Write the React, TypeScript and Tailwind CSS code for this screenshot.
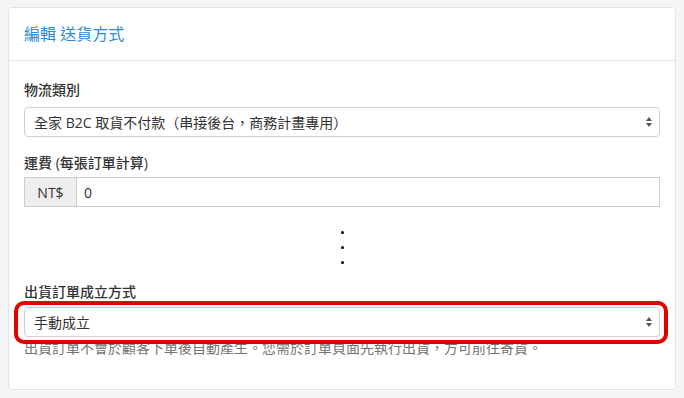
const font = { fontFamily: '"Open Sans", "Noto Sans CJK TC", sans-serif' };

function Arrows() {
  return (
    <svg width="8" height="12" viewBox="0 0 8 12" className="shrink-0">
      <path d="M4 1 L7 5 L1 5 Z" fill="#555" />
      <path d="M4 11 L7 7 L1 7 Z" fill="#555" />
    </svg>
  );
}

function FakeSelect({ value }: { value: string }) {
  return (
    <div className="flex h-[30px] items-center justify-between rounded-[4px] border border-[#cfcfcf] bg-white pl-[9px] pr-[6px] text-[14px] text-[#333]">
      <span>{value}</span>
      <Arrows />
    </div>
  );
}

export default function App() {
  return (
    <div className="h-[398px] w-[684px] bg-[#f5f5f5] px-2 pt-[7px]" style={font}>
      <div className="h-[383px] rounded-[4px] border border-[#e3e3e3] bg-white">
        <div className="flex h-[53px] items-center border-b border-[#e3e3e3] px-[15px]">
          <h3 className="text-[16px] text-[#2a8ad8]">編輯 送貨方式</h3>
        </div>
        <div className="px-[15px] pt-[20px]">
          <label className="block text-[14px] font-medium leading-[18px] text-[#333]">物流類別</label>
          <div className="mt-[8px]">
            <FakeSelect value="全家 B2C 取貨不付款（串接後台，商務計畫專用）" />
          </div>

          <label className="mt-[17px] block text-[14px] font-medium leading-[18px] text-[#333]">運費 (每張訂單計算)</label>
          <div className="mt-[5px] flex h-[30px] border border-[#ccc] text-[14px] text-[#333]">
            <div className="flex w-[52px] items-center justify-center border-r border-[#ccc] bg-[#eee]">NT$</div>
            <div className="flex items-center pl-[7px]">0</div>
          </div>

          <div className="flex flex-col items-center gap-[12px] pt-[24px]">
            <span className="h-[3px] w-[3px] rounded-full bg-black" />
            <span className="h-[3px] w-[3px] rounded-full bg-black" />
            <span className="h-[3px] w-[3px] rounded-full bg-black" />
          </div>

          <label className="mt-[19px] block text-[14px] font-medium leading-[18px] text-[#333]">出貨訂單成立方式</label>
          <div className="relative mt-[6px]">
            <FakeSelect value="手動成立" />
            <div className="pointer-events-none absolute -bottom-[7px] -left-[10px] -right-[8px] -top-[6px] z-10 rounded-[10px] border-[4px] border-[#e00000]" />
          </div>
          <p className="mt-[2px] text-[14px] leading-[18px] text-[#737373]">出貨訂單不會於顧客下單後自動產生。您需於訂單頁面先執行出貨，方可前往寄貨。</p>
        </div>
      </div>
    </div>
  );
}
